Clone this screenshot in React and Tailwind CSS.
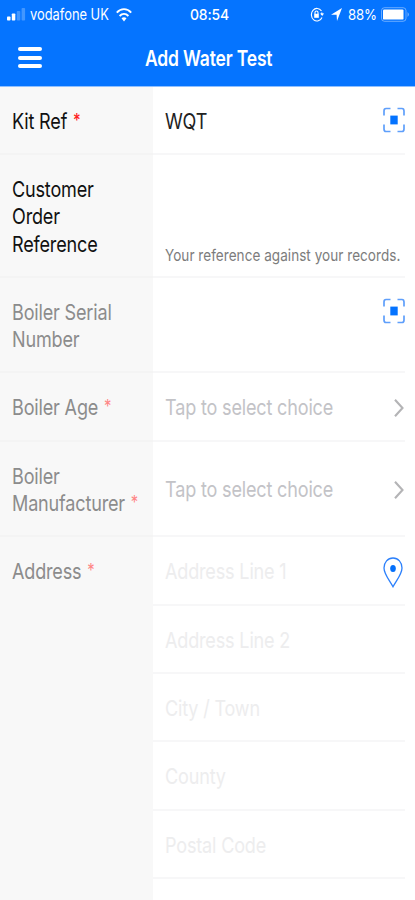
import React from 'react';

const ADDRESS_LINES = [
  { text: 'Address Line 2', height: 'h-[68px]' },
  { text: 'City / Town', height: 'h-[68px]' },
  { text: 'County', height: 'h-[69px]' },
  { text: 'Postal Code', height: 'h-[68px]' },
];

const Star = ({ faded }) => (
  <span className={`ml-[7px] inline-block -translate-y-[2px] text-[18px] leading-none ${faded ? 'text-[#ff8585]' : 'font-medium text-[#ff2020]'}`}>*</span>
);

const ScanIcon = () => (
  <svg width="22" height="26" viewBox="0 0 22 26" fill="none" stroke="#5f9ffb" strokeWidth="1.7">
    <path d="M1 8.5V4Q1 1.5 3 1.5H7.5M14.5 1.5H19Q21 1.5 21 4V8.5M21 17.5V22Q21 24.5 19 24.5H14.5M7.5 24.5H3Q1 24.5 1 22V17.5" />
    <rect x="7.3" y="8.6" width="7.4" height="8.8" fill="#0473ff" stroke="none" />
  </svg>
);

const PinIcon = () => (
  <svg width="20" height="31" viewBox="0 0 20 31" fill="none">
    <path d="M10 1C4.8 1 1 5.2 1 11C1 17 6 22.5 10 29.8C14 22.5 19 17 19 11C19 5.2 15.2 1 10 1Z" stroke="#2c80fb" strokeWidth="1.3" />
    <ellipse cx="10" cy="11.6" rx="2.8" ry="3.5" fill="#0470fb" />
  </svg>
);

const Chevron = () => (
  <svg width="10" height="20" viewBox="0 0 10 20" fill="none" stroke="#b4b4b6" strokeWidth="2.1">
    <path d="M1 1.8L8.5 10L1 18.2" />
  </svg>
);

const StatusBar = () => (
  <div className="flex h-[29px] items-center pl-[7px] pr-[5px] text-[15px] leading-none">
    <svg width="19" height="13" viewBox="0 0 19 13" fill="#fff" className="shrink-0">
      <rect x="0" y="8.5" width="3.5" height="4" rx="0.8" />
      <rect x="4.8" y="5.5" width="3.5" height="7" rx="0.8" />
      <rect x="9.8" y="3" width="3.5" height="9.5" rx="0.8" opacity="0.25" />
      <rect x="14.6" y="0" width="3.5" height="12.5" rx="0.8" opacity="0.25" />
    </svg>
    <div className="ml-[4px] w-[86px] whitespace-nowrap text-[15.5px] tracking-normal">
      <span className="inline-block origin-left scale-x-[0.83]">vodafone UK</span>
    </div>
    <svg width="16" height="14" viewBox="0 0 16 14" fill="none" stroke="#fff" strokeWidth="1.9" className="shrink-0">
      <path d="M0.8 4.6C5 0 11 0 15.2 4.6M3.6 8C6.2 5.2 9.8 5.2 12.4 8" />
      <path d="M5.5 10.3Q8 8.3 10.5 10.3L8 13.6Z" fill="#fff" stroke="none" />
    </svg>
    <div className="ml-[58px] w-[40px] whitespace-nowrap font-medium">
      <span className="inline-block origin-left scale-x-[0.93]">08:54</span>
    </div>
    <div className="ml-auto flex items-center">
      <svg width="14" height="15" viewBox="0 0 14 15" fill="none" stroke="#fff" strokeWidth="1.1">
        <path d="M11.5 4A5.6 6.3 0 1 0 12 10.5M11.8 5.5V8" />
        <path d="M10.4 6.6L12.2 8.8L13.8 6.6Z" fill="#fff" strokeWidth="0.3" />
        <rect x="4.2" y="6.8" width="4.6" height="4" fill="#fff" stroke="none" />
        <path d="M5 7V5.6Q5 4 6.5 4T8 5.6V7" />
      </svg>
      <svg width="11" height="13" viewBox="0 0 11 13" fill="#fff" className="ml-[7px]">
        <path d="M11 0L0 6.8H5.6L6 13Z" />
      </svg>
      <div className="ml-[6px] w-[33px] whitespace-nowrap">
        <span className="inline-block origin-left scale-x-[0.88]">88%</span>
      </div>
      <svg width="29" height="15" viewBox="0 0 29 15">
        <rect x="0.5" y="0.7" width="24.5" height="13.6" rx="3" fill="none" stroke="#fff" opacity="0.4" />
        <rect x="2" y="2.4" width="20.5" height="10.2" rx="1.2" fill="#fff" />
        <path d="M26.5 5Q29.5 7.5 26.5 10Z" fill="#fff" opacity="0.4" />
      </svg>
    </div>
  </div>
);

const Label = ({ children, active }) => (
  <div className={`w-[153px] shrink-0 bg-[#f8f8f8] pl-3 pt-[21px] ${active ? 'text-[#111]' : 'text-[#8c8c8c]'}`}>
    <div className="w-max origin-left scale-x-[0.82]">{children}</div>
  </div>
);

const Field = ({ children, className = 'items-center' }) => (
  <div className={`mr-[10px] flex min-w-0 flex-1 border-b-2 border-[#f7f7f8] pl-3 ${className}`}>
    {children}
  </div>
);

const Value = ({ children, className }) => (
  <span className={`w-max origin-left whitespace-nowrap scale-x-[0.82] ${className}`}>{children}</span>
);

const Row = ({ height, children }) => (
  <div className={`flex shrink-0 ${height}`}>{children}</div>
);

const Divider = () => <div className="-mt-[2px] h-[2px] w-[153px] shrink-0 bg-[#f4f4f4]" />;

export default function App() {
  return (
    <div className="flex h-[900px] w-[415px] flex-col overflow-hidden bg-white font-['Inter','Liberation_Sans',sans-serif] text-[22px] leading-[27.3px] tracking-[-0.2px]">
      <header className="h-[87px] shrink-0 border-b border-[#8fc0ff] bg-[#0574ff] text-white">
        <StatusBar />
        <div className="flex h-[56px] items-center">
          <div className="ml-[18px] mt-[1px] flex w-[24px] flex-col gap-[4.5px]">
            <div className="h-[4px] rounded-full bg-white" />
            <div className="h-[4px] rounded-full bg-white" />
            <div className="h-[4px] rounded-full bg-white" />
          </div>
          <h1 className="ml-[103px] mt-[3px] origin-left whitespace-nowrap font-semibold scale-x-[0.795]">Add Water Test</h1>
        </div>
      </header>

      <Row height="h-[68px]">
        <Label active>Kit Ref<Star /></Label>
        <Field>
          <Value className="pt-[3px] text-[#222]">WQT</Value>
          <div className="ml-auto"><ScanIcon /></div>
        </Field>
      </Row>
      <Divider />

      <Row height="h-[123px]">
        <Label active>Customer<br />Order<br />Reference</Label>
        <Field className="items-end pb-[7px]">
          <Value className="text-[16.5px] tracking-[0.05px] text-[#7c7c7c]">Your reference against your records.</Value>
        </Field>
      </Row>
      <Divider />

      <Row height="h-[95px]">
        <Label>Boiler Serial<br />Number</Label>
        <Field>
          <div className="mb-[28px] ml-auto"><ScanIcon /></div>
        </Field>
      </Row>
      <Divider />

      <Row height="h-[69px]">
        <Label>Boiler Age<Star faded /></Label>
        <Field>
          <Value className="pt-[3px] text-[#c3c3c7]">Tap to select choice</Value>
          <div className="ml-auto mr-[1px] pt-[2px]"><Chevron /></div>
        </Field>
      </Row>
      <Divider />

      <Row height="h-[95px]">
        <Label>Boiler<br />Manufacturer<Star faded /></Label>
        <Field>
          <Value className="pt-[3px] text-[#c3c3c7]">Tap to select choice</Value>
          <div className="ml-auto mr-[1px] pt-[2px]"><Chevron /></div>
        </Field>
      </Row>
      <Divider />

      <div className="flex flex-1">
        <Label>Address<Star faded /></Label>
        <div className="flex flex-1 flex-col">
          <Field className="h-[69px] flex-none items-center">
            <Value className="pt-[3px] text-[#ededee]">Address Line 1</Value>
            <div className="ml-auto mr-[2px] pt-[4px]"><PinIcon /></div>
          </Field>
          {ADDRESS_LINES.map(({ text, height }) => (
            <Field key={text} className={`flex-none items-center ${height}`}>
              <Value className="pt-[3px] text-[#ededee]">{text}</Value>
            </Field>
          ))}
        </div>
      </div>
    </div>
  );
}
